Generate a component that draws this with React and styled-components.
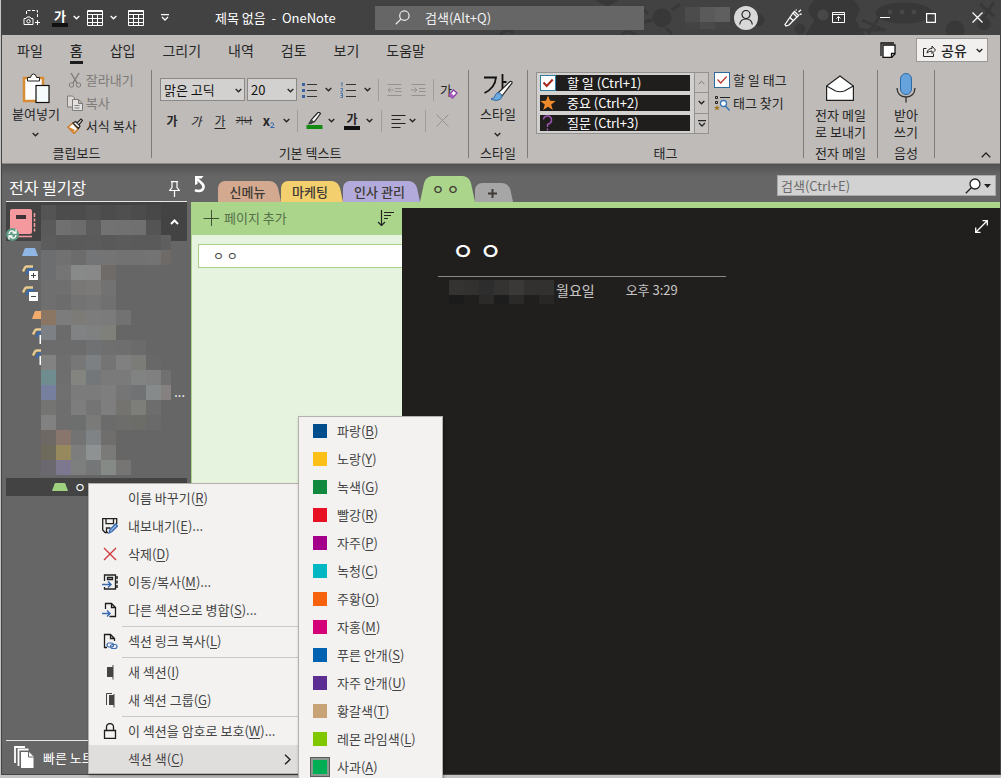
import React from "react";
import styled, { createGlobalStyle, css } from "styled-components";

const Global = createGlobalStyle`
  *, *::before, *::after { box-sizing: border-box; }
  body {
    margin: 0;
    background: #c4c4c4;
    font-family: "Noto Sans CJK KR", "Noto Sans", sans-serif;
    font-size: 13px;
    line-height: 16px;
    color: #262626;
  }
  button, input, select { font: inherit; color: inherit; }
  button { background: none; border: 0; padding: 0; }
  h1, h2, p { margin: 0; font-weight: 400; }
`;

/* ---------- window ---------- */

const Desktop = styled.div`
  position: relative;
  min-height: 100vh;
  padding: 0 0 3px 1px;
  display: flex;
  overflow: hidden;
`;

const Window = styled.div`
  flex: 1;
  min-width: 0;
  display: flex;
  flex-direction: column;
  border: solid #444;
  border-width: 0 1px 1px 1px;
  background: #666;
`;

const Svg = styled.svg.attrs((p) => ({ stroke: p.stroke || "currentColor" }))`
  display: block;
  flex: none;
  fill: none;
`;

function Icon({ w = 16, h = 16, children, ...rest }) {
  return (
    <Svg width={w} height={h} viewBox={`0 0 ${w} ${h}`} aria-hidden="true" {...rest}>
      {children}
    </Svg>
  );
}

const Chevron = () => (
  <Icon w={7} h={5} strokeWidth="1.4">
    <path d="M.7 1l2.8 2.7L6.3 1" />
  </Icon>
);

/* ---------- title bar ---------- */

const TitleBar = styled.header`
  position: relative;
  display: flex;
  align-items: center;
  height: 35px;
  background: #424242;
  color: #fff;
`;

const Doodles = styled.svg`
  position: absolute;
  right: 0;
  top: 0;
  fill: #383838;
  stroke: #383838;
`;

const QuickAccess = styled.div`
  display: flex;
  align-items: center;
  width: 213px;
  padding-left: 14px;
`;

const ToolCell = styled.button`
  display: flex;
  align-items: center;
  justify-content: center;
  flex: none;
  width: ${(p) => p.$w}px;
  height: 24px;
  color: ${(p) => p.$color || "inherit"};
`;

const Glyph = styled.span`
  font-size: ${(p) => p.$size || 12}px;
  line-height: 14px;
  font-weight: ${(p) => (p.$bold ? 700 : 400)};
  font-style: ${(p) => (p.$italic ? "italic" : "normal")};
  text-decoration: ${(p) => p.$line || "none"};
  text-underline-offset: 2px;
`;

const BarGlyph = styled(Glyph)`
  width: 16px;
  text-align: center;
  border-bottom: 4px solid ${(p) => p.$bar};
`;

const Eraser = styled(Icon)`
  margin: 8px 0 0 -4px;
`;

const DocTitle = styled.h1`
  width: 160px;
  font-size: 13px;
  line-height: 16px;
  white-space: pre;
`;

const TitleSearch = styled.label`
  position: relative;
  display: flex;
  align-items: center;
  gap: 15px;
  flex: 0 1 269px;
  height: 24px;
  padding-left: 20px;
  background: #666;
  color: #eee;
`;

const BareInput = styled.input`
  flex: 1;
  min-width: 0;
  padding: 0;
  border: 0;
  outline: 0;
  background: transparent;
  &::placeholder { color: ${(p) => p.$hint}; opacity: 1; }
`;

const WindowTools = styled.div`
  position: relative;
  display: flex;
  align-items: center;
  margin-left: auto;
`;

const Avatar = styled.button`
  display: grid;
  place-items: center;
  width: 24px;
  height: 24px;
  margin: 0 11px 0 4px;
  border-radius: 50%;
  background: #d8d8d8;
  color: #222;
`;

/* ---------- ribbon ---------- */

const Ribbon = styled.section`
  background: #bfbbb8;
  border-bottom: 1px solid #8b8987;
`;

const TabRow = styled.nav`
  display: flex;
  align-items: center;
  height: 30px;
  padding: 0 12px 0 15px;
`;

const RibbonTab = styled.button`
  height: 28px;
  margin-right: 27px;
  font-size: 14px;
  line-height: 18px;
  padding-top: ${(p) => (p.$active ? 3 : 0)}px;
  font-weight: ${(p) => (p.$active ? 500 : 400)};
  border-bottom: ${(p) => (p.$active ? "3px solid #1c1c1c" : "0")};
`;

const NoteButton = styled.button`
  margin-left: auto;
`;

const ShareButton = styled.button`
  display: flex;
  align-items: center;
  gap: 5px;
  width: 72px;
  height: 24px;
  margin-left: 20px;
  padding: 0 4px 0 6px;
  border: 1px solid #9a9896;
  background: #f1f0ef;
  font-size: 14px;
  font-weight: 500;
  & > svg:last-child { margin-left: auto; }
`;

const Groups = styled.div`
  display: flex;
  padding: 5px 0 5px;
`;

const Group = styled.div`
  display: flex;
  flex-direction: column;
  flex: none;
  width: ${(p) => p.$w}px;
  height: 88px;
  border-right: 1px solid #7e7b79;
`;

const GroupBody = styled.div`
  display: flex;
  flex: 1;
  justify-content: ${(p) => p.$justify || "flex-start"};
  padding-left: ${(p) => p.$pad || 0}px;
`;

const GroupName = styled.div`
  height: 14px;
  margin-bottom: -2px;
  line-height: 14px;
  text-align: center;
`;

const BigButton = styled.button`
  display: flex;
  flex-direction: column;
  align-items: center;
  align-self: flex-start;
  white-space: nowrap;
  line-height: 16px;
`;

const BigIcon = styled.span`
  display: grid;
  place-items: center;
  height: 36px;
`;

const LabelLine = styled.span`
  display: block;
  line-height: 17px;
`;

const Stack = styled.div`
  display: flex;
  flex-direction: column;
  gap: 3px;
`;

const SmallButton = styled.button`
  display: flex;
  align-items: center;
  gap: 3px;
  height: 20px;
  white-space: nowrap;
  color: ${(p) => (p.$off ? "#7d7a78" : "inherit")};
`;

const TextRow = styled.div`
  display: flex;
  align-items: center;
  height: 23px;
  margin-top: 8px;
`;

const Combo = styled.span`
  position: relative;
  width: ${(p) => p.$w}px;
  margin-right: 2px;
  select {
    width: 100%;
    height: 23px;
    padding: 0 0 0 3px;
    border: 1px solid #8b8987;
    border-radius: 0;
    background: #d3d1cf;
    appearance: none;
    color: #111;
  }
  svg {
    position: absolute;
    right: 3px;
    top: 10px;
    pointer-events: none;
  }
`;

const Divider = styled.span`
  flex: none;
  width: 1px;
  height: 22px;
  margin: 0 ${(p) => p.$m}px;
  background: #a09d9b;
`;

const Gallery = styled.div`
  display: flex;
  width: 173px;
  height: 62px;
  margin-top: 2px;
  border: 1px solid #94928f;
  background: #d3d1cf;
`;

const GalleryList = styled.div`
  display: flex;
  flex-direction: column;
  flex: 1;
  gap: 4px;
  padding: 2px 4px 2px 3px;
`;

const TagItem = styled.button`
  display: flex;
  align-items: center;
  gap: 11px;
  height: 16px;
  background: #1f1e1d;
  color: #fff;
  white-space: nowrap;
`;

const GalleryScroll = styled.div`
  display: flex;
  flex-direction: column;
  width: 14px;
  border-left: 1px solid #94928f;
  background: #c6c3c0;
  button {
    flex: 1;
    display: grid;
    place-items: center;
  }
  button + button { border-top: 1px solid #94928f; }
`;

const TagTools = styled(Stack)`
  margin-left: 5px;
`;

const Collapse = styled.button`
  align-self: flex-end;
  margin: 0 9px 0 auto;
`;

/* ---------- workspace ---------- */

const Workspace = styled.main`
  flex: 1;
  display: flex;
  background: linear-gradient(#525252, #666 12px);
`;

const Sidebar = styled.aside`
  display: flex;
  flex-direction: column;
  flex: none;
  width: 189px;
  padding: 0 4px;
  color: #fff;
`;

const SideHeader = styled.div`
  display: flex;
  align-items: flex-end;
  justify-content: space-between;
  height: 38px;
  padding: 0 7px 4px 3px;
  border-bottom: 1px solid #e8e8e8;
  h2 { font-size: 16px; line-height: 20px; }
`;

const Tree = styled.div`
  position: relative;
  flex: 1;
  display: flex;
  flex-direction: column;
`;

const NotebookRow = styled.button`
  display: flex;
  align-items: center;
  justify-content: space-between;
  height: 39px;
  padding: 0 8px 0 0;
  background: #434343;
`;

const TreeRow = styled.div`
  display: flex;
  align-items: center;
  height: 21px;
  padding-left: ${(p) => 16 + p.$depth * 10}px;
`;

const HiddenRows = styled.div`
  display: flex;
  justify-content: flex-end;
  height: 111px;
  padding: 17px 2px 0 0;
`;

const SelectedSection = styled.button`
  display: flex;
  align-items: center;
  gap: 6px;
  height: 18px;
  padding-left: 46px;
  background: #434343;
`;

const Pixelated = styled.div`
  display: grid;
  grid-template-columns: repeat(${(p) => p.$cols}, 15px);
  grid-auto-rows: 15px;
  overflow: hidden;
  ${(p) => p.$clip && css`height: ${p.$clip}px;`}
  ${(p) =>
    p.$over &&
    css`
      position: absolute;
      left: 35px;
      top: 3px;
      width: 130px;
    `}
`;

const Pixel = styled.span`
  background: ${(p) => p.$c};
`;

const QuickNotes = styled.button`
  display: flex;
  align-items: center;
  gap: 9px;
  height: 34px;
  padding-left: 8px;
  border-top: 1px solid #e8e8e8;
  white-space: nowrap;
`;

const Notebook = styled.section`
  flex: 1;
  min-width: 0;
  display: flex;
  flex-direction: column;
`;

const SectionBar = styled.div`
  display: flex;
  align-items: flex-end;
  height: 38px;
`;

const UndoButton = styled.button`
  align-self: center;
  width: 27px;
  padding: 3px 0 0 3px;
  color: #fff;
`;

const SectionTab = styled.button`
  position: relative;
  z-index: ${(p) => p.$z};
  width: ${(p) => p.$w}px;
  height: ${(p) => p.$h}px;
  padding: 0 4px 0 0;
  font-weight: 500;
  color: #3f3a36;
  span { position: relative; z-index: 1; }
  &::before, &::after {
    content: "";
    position: absolute;
    top: 0;
    bottom: 0;
    background: ${(p) => p.$c};
  }
  &::before {
    left: 0;
    right: 50%;
    border-radius: 7px 0 0 0;
    transform-origin: bottom;
    transform: ${(p) => (p.$both ? "skewX(-12deg)" : "none")};
  }
  &::after {
    left: 40%;
    right: 0;
    border-radius: 0 7px 0 0;
    transform-origin: bottom;
    transform: skewX(12deg);
  }
`;

const PageSearch = styled.label`
  display: flex;
  align-items: center;
  gap: 3px;
  flex: 0 1 219px;
  height: 21px;
  margin: 0 4px 6px auto;
  padding: 0 4px 0 3px;
  border: 1px solid #a9a9a9;
  background: #d2d2d2;
  color: #222;
`;

const NotebookBody = styled.div`
  flex: 1;
  display: flex;
`;

const PageList = styled.div`
  flex: none;
  width: 211px;
  border-left: 1px solid #abd58b;
  background: #e6f3df;
`;

const AddPage = styled.div`
  display: flex;
  align-items: center;
  justify-content: space-between;
  height: 33px;
  padding: 0 8px 2px 11px;
  background: #abd58b;
  button { display: flex; align-items: center; gap: 5px; color: #56704a; }
`;

const PageItem = styled.button`
  display: block;
  width: 204px;
  height: 24px;
  margin: 9px 0 0 6px;
  padding-left: 14px;
  border: 1px solid #a9cf8c;
  border-right: 0;
  background: #fff;
  font-size: 12px;
  text-align: left;
  color: #444;
`;

const Canvas = styled.article`
  flex: 1;
  min-width: 0;
  border-top: 6px solid #abd58b;
  background: #211f1e;
  color: #fff;
  display: flex;
  justify-content: space-between;
  padding: 12px 12px 0 36px;
`;

const PageHead = styled.div`
  width: 288px;
  h2 {
    height: 57px;
    padding: 12px 0 0 14px;
    border-bottom: 1px solid #8a8887;
    font-size: 24px;
    line-height: 36px;
    font-weight: 500;
  }
`;

const DateLine = styled.p`
  display: flex;
  align-items: flex-start;
  padding: 3px 0 0 11px;
  line-height: 20px;
  color: #c9c7c5;
  white-space: nowrap;
  time { margin-right: 31px; padding-left: 2px; font-size: 14px; }
`;

const ExpandButton = styled.button`
  align-self: flex-start;
`;

/* ---------- menus ---------- */

const Menu = styled.div`
  position: absolute;
  left: ${(p) => p.$x}px;
  top: ${(p) => p.$y}px;
  width: ${(p) => p.$w}px;
  border: 1px solid #b3b0ad;
  background: #f3f2f1;
  box-shadow: 1px 2px 3px rgba(0, 0, 0, 0.3);
  color: #444;
`;

const MenuItem = styled.button`
  display: flex;
  align-items: center;
  gap: 10px;
  width: 100%;
  height: 28px;
  padding: 0 8px 0 ${(p) => (p.$swatch ? 14 : 13)}px;
  background: ${(p) => (p.$active ? "#e0dedd" : "transparent")};
  white-space: nowrap;
  text-align: left;
  u { text-underline-offset: 2px; }
  & > svg:last-child { margin-left: auto; color: #222; }
`;

const IconSlot = styled.span`
  display: grid;
  place-items: center;
  width: 16px;
  height: 16px;
`;

const MenuLine = styled.hr`
  height: 1px;
  margin: 2px 0 0 33px;
  border: 0;
  background: #cbc9c7;
`;

const Swatch = styled.span`
  width: 14px;
  height: 14px;
  background: ${(p) => p.$c};
  box-shadow: ${(p) => (p.$on ? "0 0 0 2px #8a9a8e, 0 0 0 3px #5c5c5c" : "none")};
`;

/* ---------- icons ---------- */

const TableIcon = () => (
  <Icon>
    <path d="M.5.5h15v15H.5zM.5 4.5h15M.5 8.5h15M.5 12.5h15M5.5 4.5v11M10.5 4.5v11" />
    <path d="M.5 1.5h15" />
  </Icon>
);

const Lens = ({ size = 16, fill = "none" }) => (
  <Svg width={size} height={size} viewBox="0 0 16 16" strokeWidth="1.3" aria-hidden="true">
    <circle cx="10" cy="6" r="5" fill={fill} />
    <path d="M6.3 9.7L.8 15.2" />
  </Svg>
);

const ListIcon = ({ numbered }) => (
  <Icon>
    <path d="M6 2.5h10M6 8.5h10M6 14.5h10" stroke="#333" />
    {numbered ? (
      <path d="M1 1.5l1-1v4M.5 6.5h2v1.8L.7 9.8h2M.5 11.5h2v4h-2M.8 13.5h1.6" stroke="#3a6ea5" strokeWidth=".9" />
    ) : (
      <path d="M1 1h3v3H1zM1 7h3v3H1zM1 13h3v3H1z" fill="#3a62a0" stroke="none" />
    )}
  </Icon>
);

const IndentIcon = ({ out }) => (
  <Icon w={15} h={14} stroke="#94918f">
    <path d="M.5 1.5h14M8 5.5h6.5M8 8.5h6.5M.5 12.5h14" />
    {out ? <path d="M7 7H1M3.5 4.5L1 7l2.5 2.5" /> : <path d="M0 7h6M3.5 4.5L6 7 3.5 9.5" />}
  </Icon>
);

const CheckBoxIcon = () => (
  <Icon>
    <rect x=".5" y=".5" width="15" height="15" fill="#fff" stroke="#2f7ea0" />
    <path d="M3.5 7.5l3.2 3.5 6-6.5" stroke="#a8261c" strokeWidth="2" />
  </Icon>
);

const MoreIcon = () => (
  <Icon w={8} h={7} strokeWidth="1.3">
    <path d="M0 .7h8M1 3l3 3 3-3" />
  </Icon>
);

const Trapezoid = ({ c, w = 16 }) => (
  <Svg width={w} height="8" viewBox={`0 0 ${w} 8`} aria-hidden="true">
    <path d={w === 16 ? "M0 8L2.5 1q.4-1 1.4-1h8.2q1 0 1.4 1L16 8z" : "M0 8L2.5 1q.4-1 1.4-1H9v8z"} fill={c} stroke="none" />
  </Svg>
);

const GroupIcon = ({ sign }) => (
  <Icon>
    <path d="M4.500 9l2-4q.5-1 1.500-1h4.500" stroke="#3d6aa8" strokeWidth="2.600" />
    <path d="M1 6.500l2-4Q3.500 1.500 4.500 1.500H11" stroke="#e8cb8e" strokeWidth="2.400" />
    {sign ? (
      <>
        <rect x="7.500" y="6.500" width="8" height="8" fill="#fff" stroke="#fff" />
        <path d={sign === "+" ? "M9 10.500h5M11.500 8v5" : "M9 10.500h5"} stroke="#444" />
      </>
    ) : (
      <path d="M8.500 7v9" stroke="#fff" strokeWidth="2" />
    )}
  </Icon>
);

const PageShape = () => <path d="M3.500 7V1.500h6l4 4v9h-6M9.500 1.500v4h4" stroke="#1c1c1c" strokeWidth="1.300" />;

const MENU_ICONS = {
  export: (
    <Icon>
      <path d="M6 14.500H3L.7 12V.7h14V6M4 .7v5h7.500v-5M4.500 14.500V10h4" stroke="#222" strokeWidth="1.300" />
      <path d="M7 15l1-3.500L13.500 6l2 2L10 13.500z" fill="#8fb3e0" stroke="#3a6ab0" strokeWidth="1.300" />
    </Icon>
  ),
  remove: (
    <Icon>
      <path d="M2 2l12 12M14 2L2 14" stroke="#d13438" strokeWidth="1.300" />
    </Icon>
  ),
  move: (
    <Icon>
      <path d="M2.500 7V1h11v14h-11v-2M5.500 3.500h5v2h-5z" stroke="#222" strokeWidth="1.300" />
      <path d="M15 2v3M15 6.500v3M15 11v3" stroke="#222" strokeWidth="1.500" />
      <path d="M0 10.500h9M6 7.500l3 3-3 3" stroke="#3a6ab0" strokeWidth="1.500" />
    </Icon>
  ),
  merge: (
    <Icon>
      <PageShape />
      <path d="M0 11.500h8M5 8.500l3 3-3 3" stroke="#3a6ab0" strokeWidth="1.500" />
    </Icon>
  ),
  link: (
    <Icon>
      <path d="M5 14.500H2.500v-13h6l4 4V8M8.500 1.500v4h4" stroke="#1c1c1c" strokeWidth="1.300" />
      <rect x="5" y="10" width="6.500" height="4" rx="2" stroke="#3a6ab0" strokeWidth="1.200" />
      <rect x="8.500" y="11.500" width="6.500" height="4" rx="2" stroke="#3a6ab0" strokeWidth="1.200" />
    </Icon>
  ),
  section: (
    <Icon>
      <path d="M5 3h6v10H5z" fill="#444" stroke="none" />
      <path d="M11 1v14.500" stroke="#444" />
    </Icon>
  ),
  sectionGroup: (
    <Icon>
      <path d="M7 3h5v10H7z" fill="#444" stroke="none" />
      <path d="M12 2v13.500M4.500 13V1.500H10" stroke="#444" />
    </Icon>
  ),
  lock: (
    <Icon>
      <path d="M2.500 7.500h11v8h-11zM4.500 7.500V4a3.500 3.500 0 0 1 7 0v3.500" stroke="#1c1c1c" strokeWidth="1.300" />
    </Icon>
  ),
};

/* ---------- data ---------- */

const RIBBON_TABS = ["파일", "홈", "삽입", "그리기", "내역", "검토", "보기", "도움말"];

const SECTIONS = [
  { name: "신메뉴", c: "#d3aa8f", w: 63, h: 21, z: 4 },
  { name: "마케팅", c: "#f3cf6e", w: 62, h: 21, z: 3 },
  { name: "인사 관리", c: "#b2aada", w: 77, h: 21, z: 2 },
  { name: "ㅇ ㅇ", c: "#abd58b", w: 55, h: 26, z: 5, both: true },
];

const CONTEXT_MENU = [
  { label: "이름 바꾸기", key: "R" },
  { label: "내보내기", key: "E", more: true, icon: "export" },
  { label: "삭제", key: "D", icon: "remove" },
  { label: "이동/복사", key: "M", more: true, icon: "move" },
  { label: "다른 섹션으로 병합", key: "S", more: true, icon: "merge" },
  null,
  { label: "섹션 링크 복사", key: "L", icon: "link" },
  null,
  { label: "새 섹션", key: "I", icon: "section" },
  { label: "새 섹션 그룹", key: "G", icon: "sectionGroup" },
  null,
  { label: "이 섹션을 암호로 보호", key: "W", more: true, icon: "lock" },
  { label: "섹션 색", key: "C", sub: true },
];

const COLORS = [
  ["파랑", "B", "#004e8c"],
  ["노랑", "Y", "#fcc017"],
  ["녹색", "G", "#10893e"],
  ["빨강", "R", "#e81123"],
  ["자주", "P", "#a4008a"],
  ["녹청", "C", "#00b7c3"],
  ["주황", "O", "#f7630c"],
  ["자홍", "M", "#d40078"],
  ["푸른 안개", "S", "#0063b1"],
  ["자주 안개", "U", "#5c2e91"],
  ["황갈색", "T", "#c7a377"],
  ["레몬 라임색", "L", "#7fc800"],
  ["사과", "A", "#00ae56"],
];

const TREE_PIXELS = [
  "545454 4c4c4c 4c4c4c 505050 4c4c4c 4f4f4f 4c4c4c 484848 -",
  "5a5a5a 707070 6c6c6c 5c5c5c 727272 717171 707070 545454 -",
  "5c5c5c 595959 5a5a5a 5b5b5b 595959 5b5b5b 5a5a5a 5a5a5a 5f5f5f",
  "6d6e70 717171 6c6c6c 737475 747474 727272 727272 737373 6d6a68",
  "6d6e70 757575 888989 888888 6e6b68 - - - -",
  "6f6f70 6f6f6f 797876 7b7a78 727272 - - - -",
  "6f6f70 6c6c6c 737373 757575 707070 - - - -",
  "8a7662 7c7c7c 7d7b78 7c7c7c 7b7b7b 727272 - - -",
  "7d8084 6b6b6b 808284 7f8080 80807b - - - -",
  "6c6c6c 6c6c6c 6c6c6c 6f7173 6f6f6f 6e6e6e 6b6b6b - -",
  "828282 6e6e6e 777777 7d8083 747474 808080 7b7b78 686868 -",
  "6f8c8e 6e6e6e 838380 74777a 7a7a7a 7a7a7a 818282 808080 707070",
  "767f9e 707070 7b7b7c 7b7b7b 7e7e7e 757575 707274 868a8a 858180",
  "747472 6e6e6e 7d7d7d 747474 7e7e7e 747370 7d7e7a 6d6d6d -",
  "818181 6e6e6e 6d6f6f 7a7a78 6b6b6b 6d6d6b 6c6c68 6a6a6a -",
  "6f6965 88766c 737373 808386 706e6d - - - -",
  "6e6b5c 96895e 7c7d7c 8e9292 7a7a78 - - - -",
  "6b6870 7d7890 7d7e7e 757678 858a87 767574 - - -",
];

const NAME_PIXELS = ["4c4c4c 5a5a5a 5f5f5f", "444444 4a4a4a 444444"];

const DATE_PIXELS = [
  "343332 323130 2e2d2d 343332 3a3938 323130 323130",
  "1c1b1b 201f1e 2b2a29 1e1d1d 2b2a29 201f1e 282726",
];

function Mosaic({ rows, ...rest }) {
  const cells = rows.flatMap((r) => r.split(" "));
  return (
    <Pixelated $cols={rows[0].split(" ").length} {...rest} aria-hidden="true">
      {cells.map((c, i) => (
        <Pixel key={i} $c={c === "-" ? "transparent" : `#${c}`} />
      ))}
    </Pixelated>
  );
}

const Hotkey = ({ label, k, more }) => (
  <span>
    {label}(<u>{k}</u>){more && "..."}
  </span>
);

/* ---------- sections of the window ---------- */

function Title() {
  return (
    <TitleBar>
      <Doodles width="520" height="35" viewBox="0 0 520 35" aria-hidden="true">
        <ellipse cx="354" cy="10" rx="25" ry="15" />
        <path d="M336 18l-10 17h58l-10-17z" />
        <ellipse cx="343" cy="15" rx="6" ry="6" fill="#484848" />
        <ellipse cx="424" cy="13" rx="28" ry="10" />
        <circle cx="410" cy="12" r="3" fill="#484848" />
        <circle cx="422" cy="12" r="3" fill="#484848" />
        <circle cx="434" cy="12" r="3" fill="#484848" />
        <path d="M168 14l-8-8M172 20l-14 4M192 10l8-6M186 28l6 6" strokeWidth="3" />
        <circle cx="182" cy="18" r="9" />
        <circle cx="475" cy="30" r="9" />
        <circle cx="320" cy="29" r="5" />
        <circle cx="278" cy="20" r="6" />
        <path d="M120 1h14l-7 4zM500 4l14 12M514 2l-12 18M382 20l22 10M400 16l-12 18M380 30h26" strokeWidth="3" />
        <circle cx="504" cy="24" r="6" />
        <path d="M20 35q8-8 14-2M142 35q6-6 14 0" strokeWidth="3" fill="none" />
      </Doodles>
      <QuickAccess>
        <ToolCell $w={31} aria-label="화면 캡처">
          <Icon w={17} h={17}>
            <path d="M3.500 5V1.500h11v8" strokeDasharray="3 1.500" />
            <path d="M1 9.500h2l1-1.500h3l1 1.500h2v6H1zM12 13.500h5M14.500 11v5" />
            <circle cx="5.500" cy="12.300" r="1.700" />
          </Icon>
        </ToolCell>
        <ToolCell $w={26} aria-label="글꼴 색">
          <BarGlyph $bar="#111" $bold $size={13}>가</BarGlyph>
        </ToolCell>
        <Chevron />
        <ToolCell $w={30} aria-label="표"><TableIcon /></ToolCell>
        <Chevron />
        <ToolCell $w={38} aria-label="표 삽입"><TableIcon /></ToolCell>
        <ToolCell $w={20} aria-label="사용자 지정"><MoreIcon /></ToolCell>
      </QuickAccess>
      <DocTitle>제목 없음  -  OneNote</DocTitle>
      <TitleSearch>
        <Lens size={15} />
        <BareInput $hint="#f2f2f2" placeholder="검색(Alt+Q)" aria-label="검색" />
      </TitleSearch>
      <WindowTools>
        <Mosaic rows={NAME_PIXELS} $clip={22} />
        <Avatar aria-label="계정">
          <Icon w={14} h={15} strokeWidth="1.200">
            <circle cx="7" cy="4.500" r="4" />
            <path d="M.7 14.500q.6-5.500 6.300-5.500t6.300 5.500" />
          </Icon>
        </Avatar>
        <ToolCell $w={47} aria-label="그리기">
          <Icon w={18} h={18} strokeWidth="1.300">
            <path d="M1 15.500L9 4l4 4-8 8-3 1zM9 4l1.500-1.500 4 4L13 8M6 8.500l3.500 3.500M12 1.500l.5-1M14.500 3L17 .7M15.500 5.500l2-.5" />
          </Icon>
        </ToolCell>
        <ToolCell $w={45} aria-label="리본 표시 옵션">
          <Icon w={13} h={11}>
            <path d="M.5.5h12v10H.5zM.5 2.500h12M6.500 9V4.500M4.500 6.500l2-2 2 2" />
          </Icon>
        </ToolCell>
        <ToolCell $w={47} aria-label="최소화">
          <Icon w={10} h={10}><path d="M0 4.500h10" /></Icon>
        </ToolCell>
        <ToolCell $w={46} aria-label="최대화">
          <Icon w={10} h={10} strokeWidth="1.200"><path d="M.6.6h8.800v8.800H.6z" /></Icon>
        </ToolCell>
        <ToolCell $w={46} aria-label="닫기">
          <Icon w={11} h={11} strokeWidth="1.200"><path d="M.5.5l10 10M10.500.5l-10 10" /></Icon>
        </ToolCell>
      </WindowTools>
    </TitleBar>
  );
}

function ClipboardGroup() {
  return (
    <Group $w={150}>
      <GroupBody $pad={10}>
        <BigButton>
          <BigIcon>
            <Icon w={28} h={31}>
              <rect x="2" y="5" width="19" height="23" fill="#fff" stroke="#d78b35" strokeWidth="2.500" />
              <path d="M5.500 8V4.500h3Q9 1 11.500 1T14.500 4.500h3V8z" fill="#fff" stroke="#222" />
              <rect x="14" y="12.500" width="13" height="17" fill="#f6fbfb" stroke="#111" strokeWidth="1.200" />
            </Icon>
          </BigIcon>
          붙여넣기
          <ToolCell as="span" $w={20}><Chevron /></ToolCell>
        </BigButton>
        <Stack>
          <SmallButton $off>
            <Icon w={23}>
              <path d="M11 1l6 10M19 1l-6 10" strokeWidth="1.400" />
              <circle cx="11.500" cy="13" r="2.200" />
              <circle cx="18.500" cy="13" r="2.200" />
            </Icon>
            잘라내기
          </SmallButton>
          <SmallButton $off>
            <Icon w={23}>
              <path d="M7.500 1h5l2 2v9h-7z" fill="#dcdad8" />
              <path d="M12.500 4.500h6l4 4v7h-10zM18.500 4.500v4h4M14.500 10.500h5M14.500 13h5" fill="#e4e2e0" />
            </Icon>
            복사
          </SmallButton>
          <SmallButton>
            <Icon w={23}>
              <path d="M8 9l5-4 5 6-4 4.500z" fill="#fff" stroke="#c97b2b" strokeWidth="1.500" />
              <path d="M9 9l6 3-2 3z" fill="#d78b35" stroke="none" />
              <path d="M13 5l2.500-1.500L20 8l-1.500 2.500zM17 5l4-4 1.500 1.500-3.500 4" fill="#fff" stroke="#222" strokeWidth="1.200" />
            </Icon>
            서식 복사
          </SmallButton>
        </Stack>
      </GroupBody>
      <GroupName>클립보드</GroupName>
    </Group>
  );
}

function TextGroup() {
  return (
    <Group $w={317}>
      <GroupBody $pad={8}>
        <div>
          <TextRow>
            <Combo $w={85}>
              <select aria-label="글꼴"><option>맑은 고딕</option></select>
              <Chevron />
            </Combo>
            <Combo $w={50}>
              <select aria-label="글꼴 크기"><option>20</option></select>
              <Chevron />
            </Combo>
            <ToolCell $w={20} aria-label="글머리 기호"><ListIcon /></ToolCell>
            <ToolCell $w={18} aria-label="글머리 기호 옵션"><Chevron /></ToolCell>
            <ToolCell $w={22} aria-label="번호 매기기"><ListIcon numbered /></ToolCell>
            <ToolCell $w={16} aria-label="번호 옵션"><Chevron /></ToolCell>
            <Divider $m={3} />
            <ToolCell $w={24} aria-label="내어쓰기"><IndentIcon out /></ToolCell>
            <ToolCell $w={24} aria-label="들여쓰기"><IndentIcon /></ToolCell>
            <Divider $m={3} />
            <ToolCell $w={24} aria-label="서식 지우기">
              <Glyph $size={13}>가</Glyph>
              <Eraser w={10} h={10}>
                <path d="M1 6l4.500-5L9 4 4.500 9z" fill="#fff" stroke="#8e3fa8" strokeWidth="1.300" />
                <path d="M1 6l1.800-2L6.300 7 4.500 9z" fill="#a65cc0" stroke="none" />
              </Eraser>
            </ToolCell>
          </TextRow>
          <TextRow>
            <ToolCell $w={24}><Glyph $bold>가</Glyph></ToolCell>
            <ToolCell $w={24}><Glyph $italic>가</Glyph></ToolCell>
            <ToolCell $w={24}><Glyph $line="underline">가</Glyph></ToolCell>
            <ToolCell $w={24}><Glyph $size={9} $line="line-through">가나</Glyph></ToolCell>
            <ToolCell $w={26} aria-label="아래 첨자">
              <Glyph $bold $size={13}>x</Glyph>
              <Icon w={5} h={14}>
                <path d="M.5 9.500q1.500-1.500 3 0t-3 4h4" stroke="#3a6ab0" />
              </Icon>
            </ToolCell>
            <ToolCell $w={8} aria-label="첨자 옵션"><Chevron /></ToolCell>
            <Divider $m={7} />
            <ToolCell $w={18} aria-label="형광펜">
              <Icon w={17} h={17}>
                <path d="M4 9.500l2 2M3.500 11.500l2-4 6.500-7q1.500-.5 2.500 1l-6 8z" fill="#fff" stroke="#222" strokeWidth="1.200" />
                <path d="M2 11.500l3.500-4 3 2.500-3 1.500z" fill="#444" stroke="none" />
                <path d="M.5 13h16v4H.5z" fill="#138a13" stroke="none" />
              </Icon>
            </ToolCell>
            <ToolCell $w={16} aria-label="형광펜 옵션"><Chevron /></ToolCell>
            <ToolCell $w={26} aria-label="글꼴 색"><BarGlyph $bar="#111" $bold>가</BarGlyph></ToolCell>
            <ToolCell $w={8} aria-label="글꼴 색 옵션"><Chevron /></ToolCell>
            <Divider $m={8} />
            <ToolCell $w={16} aria-label="맞춤">
              <Icon w={15} h={14} stroke="#222"><path d="M.5 1.500h14M.5 5.500h9M.5 9.500h14M.5 13.500h9" /></Icon>
            </ToolCell>
            <ToolCell $w={12} aria-label="맞춤 옵션"><Chevron /></ToolCell>
            <Divider $m={7} />
            <ToolCell $w={18} aria-label="삭제" $color="#94918f">
              <Icon w={13} h={13}><path d="M.5.5l12 12M12.500.5l-12 12" /></Icon>
            </ToolCell>
          </TextRow>
        </div>
      </GroupBody>
      <GroupName>기본 텍스트</GroupName>
    </Group>
  );
}

function StyleGroup() {
  return (
    <Group $w={59}>
      <GroupBody $justify="center">
        <BigButton>
          <BigIcon>
            <Icon w={32} h={32}>
              <path d="M2 5.500h12Q13 16 2.500 21M20.500 2v16M20.500 10h4" stroke="#111" strokeWidth="1.800" />
              <path d="M16 21L28 9.500q2.500-.5 2 1.500L20 24z" fill="#fff" stroke="#222" strokeWidth="1.200" />
              <path d="M9 27q3.500-.5 4.500-4t5-1.500q3 2.500.5 5-4 3.500-10 .5z" fill="#6ba8dc" stroke="#2f6aa8" />
            </Icon>
          </BigIcon>
          스타일
          <ToolCell as="span" $w={20}><Chevron /></ToolCell>
        </BigButton>
      </GroupBody>
      <GroupName>스타일</GroupName>
    </Group>
  );
}

function TagGroup() {
  return (
    <Group $w={276}>
      <GroupBody $pad={8}>
        <Gallery>
          <GalleryList>
            <TagItem><CheckBoxIcon />할 일 (Ctrl+1)</TagItem>
            <TagItem>
              <Icon><path d="M8 .5l2 5.300 5.700.2-4.500 3.500L12.800 15 8 11.800 3.200 15l1.600-5.500L.3 6 6 5.800z" fill="#ef8a2c" stroke="none" /></Icon>
              중요 (Ctrl+2)
            </TagItem>
            <TagItem>
              <Icon><path d="M3.500 4.500Q4 1 7.500 1t4 3.500-4 5v2.500M7.500 13.500v2" stroke="#9b55b5" strokeWidth="1.500" /></Icon>
              질문 (Ctrl+3)
            </TagItem>
          </GalleryList>
          <GalleryScroll>
            <button aria-label="위로"><Icon w={7} h={5} stroke="#777"><path d="M.7 4l2.800-2.700L6.300 4" /></Icon></button>
            <button aria-label="아래로"><Chevron /></button>
            <button aria-label="더 보기"><MoreIcon /></button>
          </GalleryScroll>
        </Gallery>
        <TagTools>
          <SmallButton>
            <Icon>
              <rect x=".5" y=".5" width="15" height="15" fill="#fff" stroke="#2f6a9c" />
              <path d="M3.500 7.500l3.200 3.500 6-6.500" stroke="#c0392b" strokeWidth="1.300" />
            </Icon>
            할 일 태그
          </SmallButton>
          <SmallButton>
            <Icon>
              <path d="M1.500 1.500h2v2h-2zM1.500 6.500h2v2h-2zM6 2.500h10" stroke="#222" />
              <path d="M3 10l.8 2 2.200.1-1.700 1.400.6 2L3 14.300l-1.900 1.200.6-2L0 12.100l2.200-.1z" fill="#a0741c" stroke="none" />
              <circle cx="9.500" cy="8.500" r="3" fill="#fff" stroke="#3a78b5" strokeWidth="1.300" />
              <path d="M11.500 11l4 4.500" stroke="#3a78b5" strokeWidth="1.500" />
            </Icon>
            태그 찾기
          </SmallButton>
        </TagTools>
      </GroupBody>
      <GroupName>태그</GroupName>
    </Group>
  );
}

function RibbonPanel() {
  return (
    <Ribbon>
      <TabRow>
        {RIBBON_TABS.map((t) => (
          <RibbonTab key={t} $active={t === "홈"}>{t}</RibbonTab>
        ))}
        <NoteButton aria-label="페이지 메모">
          <Icon strokeWidth="1.300">
            <path d="M1 14V1h13" stroke="#111" />
            <path d="M3 3h12v9l-3.500 3.500H3z" fill="#fff" stroke="#111" />
            <path d="M15 11.500h-3.500v4" stroke="#111" />
          </Icon>
        </NoteButton>
        <ShareButton>
          <Icon w={13} h={13}>
            <path d="M3.500 4.500h-3v8h10v-3M4 9q.5-4.500 5-4.500V2l3.500 4L9 9.500V7Q6 7 4 9z" />
          </Icon>
          공유
          <Chevron />
        </ShareButton>
      </TabRow>
      <Groups>
        <ClipboardGroup />
        <TextGroup />
        <StyleGroup />
        <TagGroup />
        <Group $w={74}>
          <GroupBody $justify="center">
            <BigButton>
              <BigIcon>
                <Icon w={28} h={26} strokeWidth="1.200">
                  <path d="M.6 11L14 1l13.400 10v14.400H.6z" fill="#fff" stroke="#222" />
                  <path d="M.6 11l9 5q4.400 1.500 8.800 0l9-5" stroke="#222" />
                </Icon>
              </BigIcon>
              <LabelLine>전자 메일</LabelLine>
              <LabelLine>로 보내기</LabelLine>
            </BigButton>
          </GroupBody>
          <GroupName>전자 메일</GroupName>
        </Group>
        <Group $w={57}>
          <GroupBody $justify="center">
            <BigButton>
              <BigIcon>
                <Icon w={20} h={30}>
                  <rect x="4.500" y=".5" width="11" height="21" rx="5.500" fill="#66a3dc" stroke="#2f6aa8" />
                  <path d="M1 15q.5 9 9 9t9-9M10 24v5.500" stroke="#333" strokeWidth="1.300" />
                </Icon>
              </BigIcon>
              <LabelLine>받아</LabelLine>
              <LabelLine>쓰기</LabelLine>
            </BigButton>
          </GroupBody>
          <GroupName>음성</GroupName>
        </Group>
        <Collapse aria-label="리본 축소">
          <Icon w={10} h={6} strokeWidth="1.300"><path d="M.7 5.300L5 1l4.300 4.300" /></Icon>
        </Collapse>
      </Groups>
    </Ribbon>
  );
}

function NotebookPane() {
  return (
    <Sidebar>
      <SideHeader>
        <h2>전자 필기장</h2>
        <Icon w={11} h={16}>
          <path d="M2 .6h7M3 .6v6L.6 9.500h9.800L8 6.600v-6M5.500 9.500V16" strokeWidth="1.200" />
        </Icon>
      </SideHeader>
      <Tree>
        <NotebookRow aria-label="전자 필기장 접기">
          <Icon w={32} h={38}>
            <rect x="4" y="6" width="22" height="25" rx="2" fill="#f49a9e" stroke="none" />
            <path d="M10 12h10v4H10z" fill="#3c3436" stroke="none" />
            <path d="M28.500 10v4M28.500 15.500v3M28.500 20v4M28.500 25.500v3M12 33.500h14" stroke="#f49a9e" strokeWidth="1.500" />
            <circle cx="6.500" cy="31.500" r="6.500" fill="#5f9c83" stroke="none" />
            <path d="M3 31q.5-3.500 4-3l2.500 2M10 26.500V30H6.500M10 32q-.5 3.500-4 3L3.500 33M3 36.500V33h3.500" stroke="#fff" strokeWidth="1.300" />
          </Icon>
          <Icon w={9} h={6} strokeWidth="2"><path d="M1 5l3.500-3.500L8 5" /></Icon>
        </NotebookRow>
        <TreeRow $depth={0}><Trapezoid c="#8fb6e4" /></TreeRow>
        <TreeRow $depth={0}><GroupIcon sign="+" /></TreeRow>
        <TreeRow $depth={0}><GroupIcon sign="-" /></TreeRow>
        <TreeRow $depth={1}><Trapezoid c="#f2ab6d" w={9} /></TreeRow>
        <TreeRow $depth={1}><GroupIcon /></TreeRow>
        <TreeRow $depth={1}><GroupIcon /></TreeRow>
        <HiddenRows>...</HiddenRows>
        <SelectedSection><Trapezoid c="#9fd07f" />ㅇ ㅇ</SelectedSection>
        <Mosaic rows={TREE_PIXELS} $over />
      </Tree>
      <QuickNotes>
        <Icon w={20} h={23}>
          <path d="M1 17V1h10M4.500 20V3.500h10" strokeWidth="1.800" />
          <path d="M7 6h8l4.500 4.500V22H7z" fill="#fff" stroke="none" />
          <path d="M14.500 6v5h5" stroke="#666" />
        </Icon>
        빠른 노트
      </QuickNotes>
    </Sidebar>
  );
}

function NotebookView() {
  return (
    <Notebook>
      <SectionBar>
        <UndoButton aria-label="뒤로">
          <Icon w={12} h={17}>
            <path d="M3 3l4 3.500q3 2.500 2.500 5-.8 3.500-5 3.500-2 0-3.500-1" strokeWidth="2.600" />
            <path d="M1 0h8.500L7.500 2.500H3.500V8L1 9z" fill="#fff" stroke="none" />
          </Icon>
        </UndoButton>
        {SECTIONS.map((s) => (
          <SectionTab key={s.name} $c={s.c} $w={s.w} $h={s.h} $z={s.z} $both={s.both}>
            <span>{s.name}</span>
          </SectionTab>
        ))}
        <SectionTab $c="#a6a6a6" $w={38} $h={19} $z={1} aria-label="새 섹션 만들기">
          <span><PlusMark /></span>
        </SectionTab>
        <PageSearch>
          <BareInput $hint="#6a6a6a" placeholder="검색(Ctrl+E)" aria-label="페이지 검색" />
          <Lens fill="#fff" />
          <Icon w={7} h={4}><path d="M0 0h7L3.500 4z" fill="#222" stroke="none" /></Icon>
        </PageSearch>
      </SectionBar>
      <NotebookBody>
        <PageList>
          <AddPage>
            <button>
              <Icon><path d="M8.500 0v16M.5 8.500h16" stroke="#3f5236" /></Icon>
              페이지 추가
            </button>
            <button aria-label="페이지 정렬">
              <Icon w={17}>
                <path d="M4.500 0v15.500M1 12l3.500 3.500L8 12M7 2.500h10M7 5.500h7M7 8.500h4" stroke="#222" strokeWidth="1.200" />
              </Icon>
            </button>
          </AddPage>
          <PageItem>ㅇ ㅇ</PageItem>
        </PageList>
        <Canvas>
          <PageHead>
            <h2>ㅇ ㅇ</h2>
            <DateLine>
              <Mosaic rows={DATE_PIXELS} $clip={24} />
              <time>월요일</time>
              <span>오후 3:29</span>
            </DateLine>
          </PageHead>
          <ExpandButton aria-label="전체 페이지 보기">
            <Icon w={13} h={13} strokeWidth="1.300">
              <path d="M1 12L12 1M7.500.7h4.800v4.800M.7 7.500v4.800h4.800" />
            </Icon>
          </ExpandButton>
        </Canvas>
      </NotebookBody>
    </Notebook>
  );
}

const PlusSvg = styled(Svg)`
  display: inline-block;
  vertical-align: middle;
`;

const PlusMark = () => (
  <PlusSvg width="9" height="9" viewBox="0 0 9 9" strokeWidth="2" aria-hidden="true">
    <path d="M4.500 0v9M0 4.500h9" />
  </PlusSvg>
);

export default function App() {
  return (
    <>
      <Global />
      <Desktop>
        <Window>
          <Title />
          <RibbonPanel />
          <Workspace>
            <NotebookPane />
            <NotebookView />
          </Workspace>
        </Window>
        <Menu role="menu" $x={88} $y={483} $w={212}>
          {CONTEXT_MENU.map((m, i) =>
            m === null ? (
              <MenuLine key={i} />
            ) : (
              <MenuItem key={i} role="menuitem" $active={m.sub}>
                <IconSlot>{m.icon && MENU_ICONS[m.icon]}</IconSlot>
                <Hotkey label={m.label} k={m.key} more={m.more} />
                {m.sub && (
                  <Icon w={7} h={11} strokeWidth="1.500"><path d="M1 .7l5 4.800-5 4.800" /></Icon>
                )}
              </MenuItem>
            )
          )}
        </Menu>
        <Menu role="menu" $x={298} $y={416} $w={145}>
          {COLORS.map(([label, key, c]) => (
            <MenuItem key={key} role="menuitem" $swatch>
              <Swatch $c={c} $on={key === "A"} />
              <Hotkey label={label} k={key} />
            </MenuItem>
          ))}
        </Menu>
      </Desktop>
    </>
  );
}
